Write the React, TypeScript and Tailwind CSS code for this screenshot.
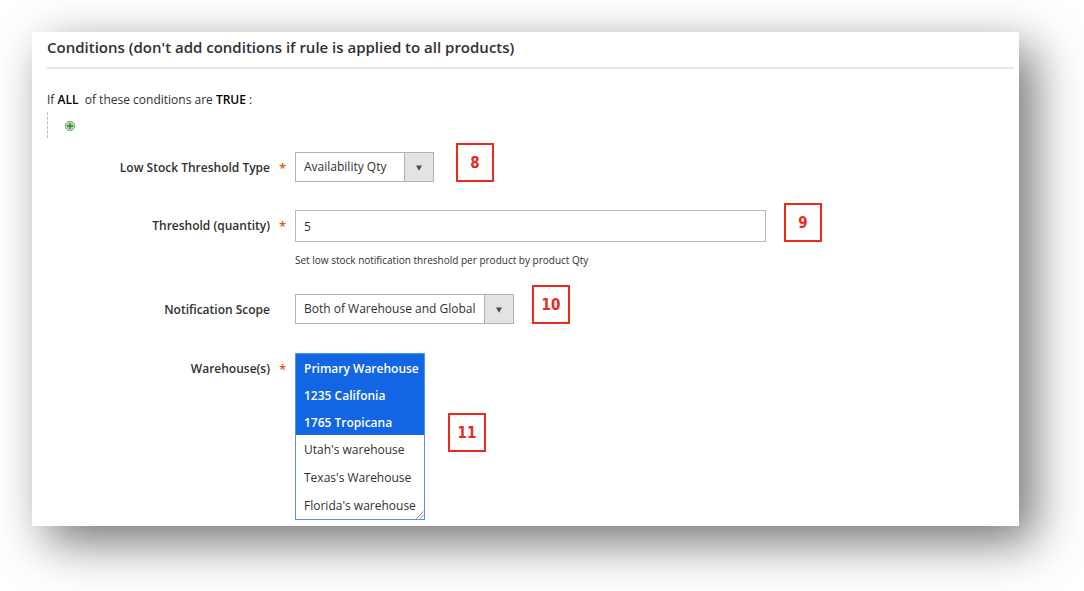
import type { ReactNode } from 'react';

const warehouses = [
  'Primary Warehouse',
  '1235 Califonia',
  '1765 Tropicana',
  "Utah's warehouse",
  "Texas's Warehouse",
  "Florida's warehouse",
];

function Badge({ children }: { children: ReactNode }) {
  return (
    <span className="-mt-[9px] flex h-[39px] w-[38px] shrink-0 items-center justify-center border-2 border-[#ea2a1c] pt-0.5 font-['DejaVu_Sans_Condensed','DejaVu_Sans',sans-serif] text-[15px] font-bold text-[#e8291b]">
      {children}
    </span>
  );
}

function Row({
  id,
  label,
  required,
  children,
}: {
  id: string;
  label: string;
  required?: boolean;
  children: ReactNode;
}) {
  return (
    <div className="flex items-start">
      <label htmlFor={id} className="w-[223px] shrink-0 text-right text-[12px] leading-8 font-semibold">
        {label}
      </label>
      <span className="w-[25px] shrink-0 text-center text-[13px] leading-8 font-semibold text-[#eb5202]">
        {required ? '*' : ''}
      </span>
      {children}
    </div>
  );
}

function Dropdown({ id, value, width }: { id: string; value: string; width: string }) {
  return (
    <div className={`relative ${width}`}>
      <select
        id={id}
        className="block h-[30px] w-full appearance-none border border-[#b3b3b3] bg-white pr-8 pl-2 text-[12px] outline-none"
      >
        <option>{value}</option>
      </select>
      <span className="pointer-events-none absolute inset-y-0 right-0 flex w-[30px] items-center justify-center border border-[#b3b3b3] bg-[#e3e3e3]">
        <svg viewBox="0 0 6 6" className="mt-0.5 size-1.5" fill="#514943">
          <path d="M0 0.5h6L3 5.8z" />
        </svg>
      </span>
    </div>
  );
}

export default function App() {
  return (
    <div className="overflow-hidden bg-white pt-8 pr-[65px] pb-[65px] pl-8 font-['Open_Sans','Noto_Sans',sans-serif] text-[#303030]">
      <main className="bg-white pr-[5px] pb-[6px] pl-[15px] shadow-[15px_16px_46px_rgba(0,0,0,0.55)]">
        <h1 className="border-b-2 border-[#e9e6de] pt-[3px] pb-2 text-[15px] leading-6 font-semibold">
          Conditions (don't add conditions if rule is applied to all products)
        </h1>
        <p className="mt-[21px] text-[12px] leading-5">
          If <b className="font-semibold text-black">ALL</b>&nbsp; of these conditions are{' '}
          <b className="font-semibold text-black">TRUE</b> :
        </p>
        <div className="mt-0.5 flex h-[26px] items-center border-l border-dashed border-[#bdbdbd] pl-4">
          <button type="button" aria-label="Add condition" className="mt-0.5">
            <svg viewBox="0 0 12 12" className="size-3">
              <circle cx="6" cy="6" r="4.7" fill="#b5d9b2" stroke="#84a480" />
              <path d="M6 3v6M3 6h6" stroke="#3f943f" strokeWidth="1.8" />
            </svg>
          </button>
        </div>
        <form className="mt-[14px]">
          <Row id="type" label="Low Stock Threshold Type" required>
            <div className="flex items-end gap-[22px]">
              <Dropdown id="type" value="Availability Qty" width="w-[139px]" />
              <Badge>8</Badge>
            </div>
          </Row>
          <div className="mt-[26px]">
            <Row id="qty" label="Threshold (quantity)" required>
              <div className="min-w-0 flex-1">
                <div className="flex items-end gap-[18px]">
                  <input
                    id="qty"
                    type="text"
                    defaultValue="5"
                    className="h-8 w-full max-w-[471px] min-w-0 border border-[#b9b9b9] bg-white px-2 text-[12px] outline-none"
                  />
                  <Badge>9</Badge>
                </div>
                <p className="mt-2 text-[10px] leading-5">
                  Set low stock notification threshold per product by product Qty
                </p>
              </div>
            </Row>
          </div>
          <div className="mt-6">
            <Row id="scope" label="Notification Scope">
              <div className="flex items-end gap-[18px]">
                <Dropdown id="scope" value="Both of Warehouse and Global" width="w-[219px]" />
                <Badge>10</Badge>
              </div>
            </Row>
          </div>
          <div className="mt-[27px]">
            <Row id="warehouses" label="Warehouse(s)" required>
              <div className="flex items-center gap-[23px]">
                <div className="relative">
                  <select
                    id="warehouses"
                    multiple
                    size={6}
                    defaultValue={warehouses.slice(0, 3)}
                    className="block h-[167px] w-[130px] appearance-none overflow-hidden border border-[#4a96e8] bg-white p-0 text-[12px] outline-none"
                  >
                    {warehouses.map((name) => (
                      <option
                        key={name}
                        value={name}
                        className="h-7 min-h-0 px-2 pt-[6px] pb-0 text-[#303030] checked:h-[27px] checked:bg-[#1266e3] checked:bg-linear-to-r checked:from-[#1266e3] checked:to-[#1266e3] checked:font-semibold checked:text-white"
                      >
                        {name}
                      </option>
                    ))}
                  </select>
                  <svg
                    viewBox="0 0 8 8"
                    className="pointer-events-none absolute right-px bottom-px size-2"
                    stroke="#8a8a8a"
                    fill="none"
                  >
                    <path d="M0.5 7.5l7-7M4 7.5L7.5 4" />
                  </svg>
                </div>
                <Badge>11</Badge>
              </div>
            </Row>
          </div>
        </form>
      </main>
    </div>
  );
}
